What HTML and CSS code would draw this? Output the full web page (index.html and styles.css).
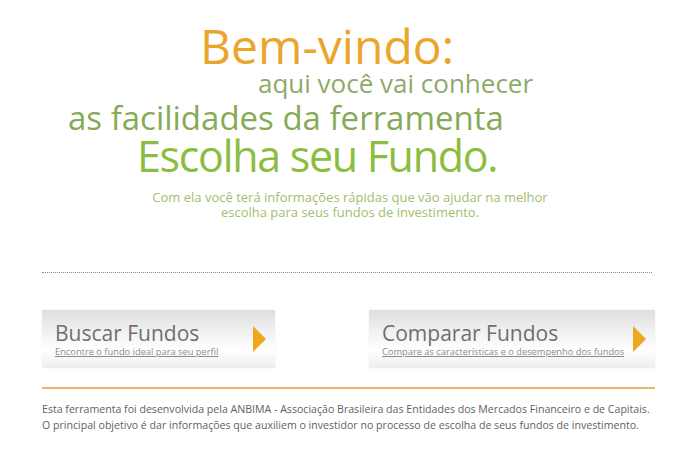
FILE: index.html
```html
<!DOCTYPE html>
<html lang="pt">
<head>
<meta charset="utf-8">
<link rel="stylesheet" href="styles.css">
</head>
<body>
<div class="page">
  <header class="hero">
    <div class="l1">Bem-vindo:</div>
    <div class="l2">aqui você vai conhecer</div>
    <div class="l3">as facilidades da ferramenta</div>
    <div class="l4">Escolha seu Fundo.</div>
    <p class="intro">Com ela você terá informações rápidas que vão ajudar na melhor<br>escolha para seus fundos de investimento.</p>
  </header>
  <div class="dots"></div>
  <div class="actions">
    <a class="btn btn-left" href="#">
      <span class="btn-text">
        <span class="btn-title">Buscar Fundos</span>
        <span class="btn-sub">Encontre o fundo ideal para seu perfil</span>
      </span>
      <span class="arrow"></span>
    </a>
    <a class="btn btn-right" href="#">
      <span class="btn-text">
        <span class="btn-title">Comparar Fundos</span>
        <span class="btn-sub">Compare as características e o desempenho dos fundos</span>
      </span>
      <span class="arrow"></span>
    </a>
  </div>
  <div class="rule"></div>
  <p class="footer">Esta ferramenta foi desenvolvida pela ANBIMA - Associação Brasileira das Entidades dos Mercados Financeiro e de Capitais.<br>O principal objetivo é dar informações que auxiliem o investidor no processo de escolha de seus fundos de investimento.</p>
</div>
</body>
</html>
```
FILE: styles.css
```css
* { box-sizing: border-box; }
html, body { margin: 0; padding: 0; background: #fff; }
body { font-family: "Open Sans", "Liberation Sans", sans-serif; width: 700px; height: 451px; overflow: hidden; }
.page { padding: 0 0 0 42px; }
.hero { padding-top: 22px; }
.hero div { white-space: nowrap; line-height: 1; }
.l1 { margin-left: 158px; font-size: 48px; color: #eaa62c; height: 48px; }
.l2 { margin-left: 216px; font-size: 26px; color: #8dab68; height: 26px; }
.l3 { margin: 5px 0 0 26px; font-size: 33px; color: #87aa55; height: 33px; }
.l4 { margin-left: 95px; font-size: 43px; letter-spacing: -1.3px; color: #8bbd40; height: 43px; }
.intro { margin: 13px 0 0; width: 616px; text-align: center; font-size: 13px; line-height: 15px; color: #9fc06c; }
.dots { margin-top: 52px; width: 610px; border-top: 1px dotted #8c8c8c; }
.actions { margin-top: 37px; display: flex; gap: 94px; }
.btn { display: flex; align-items: center; justify-content: space-between; height: 58px; padding: 0 9px 0 13px; text-decoration: none;
  background: linear-gradient(#dedede 0%, #f2f2f2 40%, #ffffff 70%, #ededed 100%); box-shadow: 0 0 2px rgba(0,0,0,0.07); }
.btn-left { width: 233px; }
.btn-right { width: 286px; }
.btn-text { display: flex; flex-direction: column; }
.btn-title { font-size: 21px; line-height: 24px; color: #6f6f6f; }
.btn-sub { font-size: 9.3px; line-height: 12px; color: #8c8c8c; text-decoration: underline; white-space: nowrap; margin-top: 1px; }
.arrow { width: 0; height: 0; border-top: 13px solid transparent; border-bottom: 13px solid transparent; border-left: 13px solid #efa71d; }
.rule { margin-top: 19px; width: 613px; height: 2px; background: #e7b768; }
.footer { margin: 12px 0 0; font-size: 10.6px; line-height: 16px; color: #5f5f5f; white-space: nowrap; }
```
